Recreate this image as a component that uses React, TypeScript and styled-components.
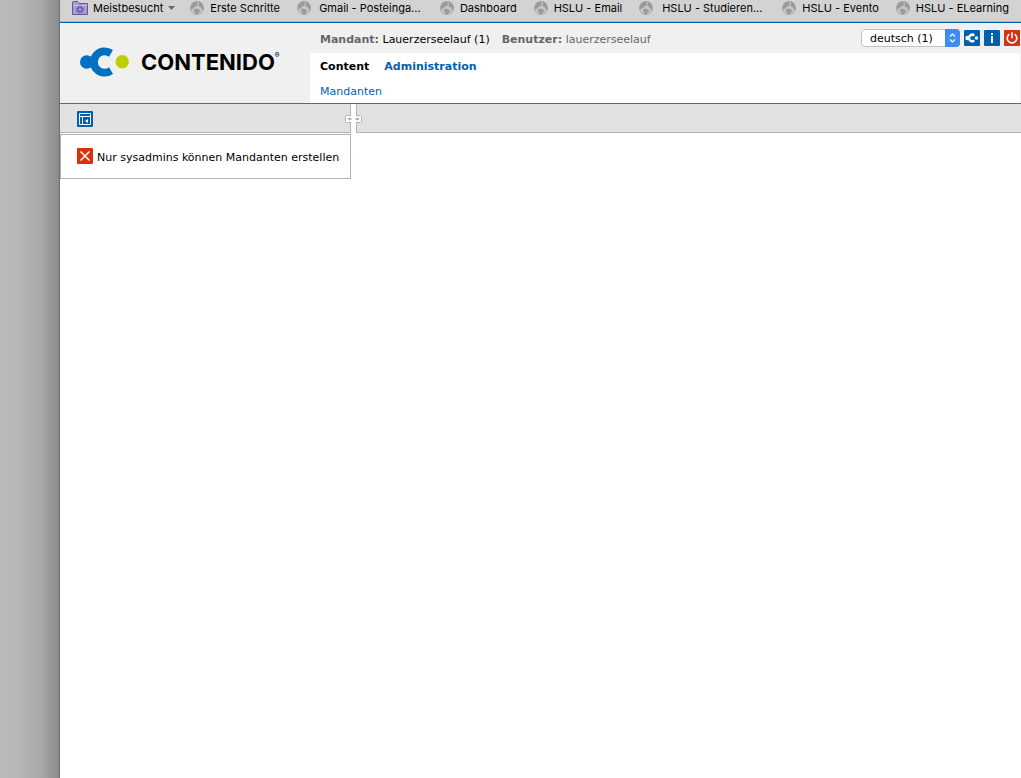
import React from "react";
import styled, { createGlobalStyle } from "styled-components";

const GlobalStyle = createGlobalStyle`
  * { box-sizing: border-box; }
  body {
    margin: 0;
    background: #fff;
    color: #000;
    font: 11px/16px Verdana, "DejaVu Sans", sans-serif;
  }
  a { text-decoration: none; color: inherit; }
  button { border: 0; padding: 0; margin: 0; background: none; font: inherit; display: block; cursor: pointer; }
  svg { display: block; flex: none; }
`;

const Page = styled.div`
  display: grid;
  grid-template-columns: 60px minmax(0, 1fr);
  min-height: 100vh;
`;

const Desktop = styled.div`
  background: linear-gradient(to right, #bababa 0, #b6b6b6 20px, #a9a9a9 40px, #8c8c8c 59px);
  border-right: 1px solid #6e6e6e;
`;

const BrowserWindow = styled.div`
  min-width: 0;
`;

const Bookmarks = styled.nav`
  display: flex;
  gap: 15px;
  height: 22px;
  padding: 0 12px;
  overflow: hidden;
  background: #d3d3d3;
  border-bottom: 1px solid #b9b9b9;
  font-family: Inter, sans-serif;
  white-space: nowrap;
`;

const Bookmark = styled.a<{ $folder?: boolean }>`
  display: flex;
  flex: none;
  align-items: center;
  gap: ${(p) => (p.$folder ? "5px" : "6px")};
  height: 16px;
  padding-right: ${(p) => (p.$folder ? "0" : "2px")};
`;

const BookmarkLabel = styled.span<{ $fixed?: boolean }>`
  width: ${(p) => (p.$fixed ? "106px" : "auto")};
  text-align: center;
`;

const Header = styled.header`
  display: grid;
  grid-template-columns: 250px minmax(0, 1fr);
  height: 82px;
  background: #f0f0f0;
  border-top: 1px solid #0060b0;
  border-bottom: 1px solid #666;
`;

const Logo = styled.a`
  display: flex;
  align-items: center;
  gap: 12px;
  height: 78px;
  padding-left: 20px;
`;

const Wordmark = styled.span`
  display: flex;
  font: 700 22px/26px Inter, sans-serif;
`;

const Registered = styled.span`
  font-size: 7px;
  line-height: 14px;
`;

const HeaderMain = styled.div`
  display: flex;
  flex-direction: column;
  margin-right: 1px;
`;

const InfoBar = styled.div`
  display: flex;
  align-items: center;
  height: 30px;
  padding-left: 10px;
  gap: 12px;
  white-space: nowrap;
`;

const Info = styled.span<{ $muted?: boolean }>`
  color: ${(p) => (p.$muted ? "#666" : "#000")};
  padding-top: 4px;
  b { color: #666; }
`;

const Tools = styled.div`
  display: flex;
  align-items: center;
  gap: 4px;
  margin-left: auto;
`;

const LanguagePicker = styled.label`
  position: relative;
  display: block;
  width: 99px;
  height: 18px;
`;

const LanguageSelect = styled.select`
  display: block;
  appearance: none;
  width: 100%;
  height: 18px;
  padding: 1px 20px 0 8px;
  border: 1px solid #c2c2c2;
  border-radius: 4px;
  background: #fff;
  color: #000;
  font: inherit;
`;

const SelectArrows = styled.svg`
  position: absolute;
  top: 0;
  right: 0;
  pointer-events: none;
`;

const NavArea = styled.div`
  flex: 1;
  padding: 6px 10px 0;
  background: #fff;
`;

const MainNav = styled.nav`
  display: flex;
  gap: 15px;
  margin-bottom: 9px;
  font-weight: 700;
`;

const NavLink = styled.a<{ $current?: boolean }>`
  color: ${(p) => (p.$current ? "#000" : "#0060b0")};
`;

const Workspace = styled.div`
  display: grid;
  grid-template-columns: 291px minmax(0, 1fr);
  column-gap: 5px;
  position: relative;
`;

const Toolbar = styled.div<{ $side: "left" | "right" }>`
  display: flex;
  align-items: center;
  height: 29px;
  padding: 2px 0 0 17px;
  background: #e2e2e2;
  border-bottom: 1px solid #b3b3b3;
  border-${(p) => (p.$side === "left" ? "right" : "left")}: 1px solid #b3b3b3;
`;

const ResizeHandle = styled.button`
  position: absolute;
  left: 285px;
  top: 10px;
`;

const Message = styled.p`
  display: flex;
  align-items: flex-start;
  gap: 4px;
  height: 45px;
  margin: 1px 0 0;
  padding: 13px 0 0 16px;
  border: 1px solid #b3b3b3;
  white-space: nowrap;
`;

const MessageText = styled.span`
  padding-top: 2px;
`;

const FolderIcon = () => (
  <svg width="16" height="16" viewBox="0 0 16 16">
    <path d="M.5 4V2.500q0-1 1-1h4l1.500 2h8.500v11H.5z" fill="#a99bd3" stroke="#65568f" />
    <path d="M1 5.500h14" stroke="#c6bce6" />
    <circle cx="8" cy="9.500" r="2.300" fill="none" stroke="#6f5fae" strokeWidth="1.800" />
    <circle cx="8" cy="9.500" r="3.500" fill="none" stroke="#6f5fae" strokeWidth=".9" strokeDasharray="1.400 1.350" />
  </svg>
);

const GlobeIcon = () => (
  <svg width="14" height="16" viewBox="0 0 14 16">
    <circle cx="7" cy="8" r="6.600" fill="#c6c6c6" stroke="#a2a2a2" strokeWidth=".8" />
    <path d="M.8 6 2.500 3 5.500 1.400l2.500.4-.8 2 1 .8-1.700 1.600-2 .6-.5 1.400L2.500 8.500 1 9.500zM8.800 1.600l3 1.500 1.700 3.400-.2 3.500-1.600-.6-.6-2-2-.7-.6-2.200z" fill="#9b9b9b" />
    <path d="M4.200 9.200l2.400-.7 3 1.400.8 1.400-1.600 1.300-1.200 1.700L5.300 14l-.4-2.300-1.200-1z" fill="#9b9b9b" />
  </svg>
);

const LogoMark = () => (
  <svg width="49" height="30" viewBox="0 0 49 30">
    <circle cx="6.700" cy="15" r="6.700" fill="#0071c1" />
    <path d="M9 9.300Q11.500 10.500 13 7.500V22.500Q11.500 19.500 9 20.700z" fill="#0071c1" />
    <path d="M33 3.100A14.600 14.600 0 1 0 33 26.900L29 20.200A6.800 6.800 0 1 1 29 9.800z" fill="#0071c1" />
    <circle cx="42.200" cy="14.700" r="6.700" fill="#bbcf00" />
  </svg>
);

const Arrows = () => (
  <SelectArrows width="15" height="18" viewBox="0 0 15 18">
    <path d="M0 0h11q4 0 4 4v10q0 4-4 4H0z" fill="#3b8df5" />
    <path d="M5 7.500 7.500 5 10 7.500M5 10.500 7.500 13l2.500-2.500" fill="none" stroke="#fff" strokeWidth="1.200" />
  </SelectArrows>
);

const Tile = ({ color, children }: { color: string; children: React.ReactNode }) => (
  <svg width="16" height="16" viewBox="0 0 16 16">
    <rect width="16" height="16" rx="1" fill={color} />
    {children}
  </svg>
);

const ArticleIcon = () => (
  <Tile color="#0060b0">
    <path d="M2.500 2.500h11v11h-11zM2.500 5.500h11M5.500 5.500v8" fill="none" stroke="#fff" />
    <path d="M8 10 11 8v4z" fill="#fff" />
  </Tile>
);

const bookmarks = [
  { label: "Erste Schritte" },
  { label: "Gmail - Posteinga...", fixed: true },
  { label: "Dashboard" },
  { label: "HSLU - Email" },
  { label: "HSLU - Studieren...", fixed: true },
  { label: "HSLU - Evento" },
  { label: "HSLU - ELearning" },
];

export default function App() {
  return (
    <Page>
      <GlobalStyle />
      <Desktop />
      <BrowserWindow>
        <Bookmarks>
          <Bookmark href="#" $folder>
            <FolderIcon />
            <BookmarkLabel>Meistbesucht</BookmarkLabel>
            <svg width="7" height="4" viewBox="0 0 7 4"><path d="M0 0h7L3.500 4z" fill="#686868" /></svg>
          </Bookmark>
          {bookmarks.map((b) => (
            <Bookmark href="#" key={b.label}>
              <GlobeIcon />
              <BookmarkLabel $fixed={b.fixed}>{b.label}</BookmarkLabel>
            </Bookmark>
          ))}
        </Bookmarks>
        <Header>
          <Logo href="#">
            <LogoMark />
            <Wordmark>CONTENIDO<Registered>®</Registered></Wordmark>
          </Logo>
          <HeaderMain>
            <InfoBar>
              <Info><b>Mandant:</b> Lauerzerseelauf (1)</Info>
              <Info $muted><b>Benutzer:</b> lauerzerseelauf</Info>
              <Tools>
                <LanguagePicker>
                  <LanguageSelect aria-label="Sprache"><option>deutsch (1)</option></LanguageSelect>
                  <Arrows />
                </LanguagePicker>
                <button aria-label="Frontend">
                  <Tile color="#0060b0">
                    <circle cx="3.500" cy="8" r="2.200" fill="#fff" />
                    <path d="M10.300 5.600A3.200 3.200 0 1 0 10.300 10.400" fill="none" stroke="#fff" strokeWidth="2.400" />
                    <circle cx="12.500" cy="8" r="1.700" fill="#fff" />
                  </Tile>
                </button>
                <button aria-label="Info">
                  <Tile color="#0060b0">
                    <path d="M7 3h2v2H7zM7 6h2v7H7z" fill="#fff" />
                  </Tile>
                </button>
                <button aria-label="Abmelden">
                  <Tile color="#d8310f">
                    <path d="M5.300 4.200a4.800 4.800 0 1 0 5.400 0M8 2.200v6" fill="none" stroke="#fff" strokeWidth="1.600" />
                  </Tile>
                </button>
              </Tools>
            </InfoBar>
            <NavArea>
              <MainNav>
                <NavLink href="#" $current>Content</NavLink>
                <NavLink href="#">Administration</NavLink>
              </MainNav>
              <NavLink href="#">Mandanten</NavLink>
            </NavArea>
          </HeaderMain>
        </Header>
        <Workspace>
          <section>
            <Toolbar $side="left">
              <button aria-label="Artikel"><ArticleIcon /></button>
            </Toolbar>
            <Message>
              <Tile color="#d8310f">
                <path d="m3.500 3.500 9 9m0-9-9 9" stroke="#fff" strokeWidth="1.500" />
              </Tile>
              <MessageText>Nur sysadmins können Mandanten erstellen</MessageText>
            </Message>
          </section>
          <Toolbar $side="right" />
          <ResizeHandle aria-label="Spaltenbreite">
            <svg width="17" height="9" viewBox="0 0 17 9">
              <rect x=".5" y="1.500" width="16" height="7" rx="1" fill="#fff" stroke="#b3b3b3" />
              <path d="M6 0h5v9H6z" fill="#fff" />
              <path d="M2.500 5l2-2v1h2v2h-2v1zM14.500 5l-2-2v1h-2v2h2v1z" fill="#b3b3b3" />
            </svg>
          </ResizeHandle>
        </Workspace>
      </BrowserWindow>
    </Page>
  );
}
